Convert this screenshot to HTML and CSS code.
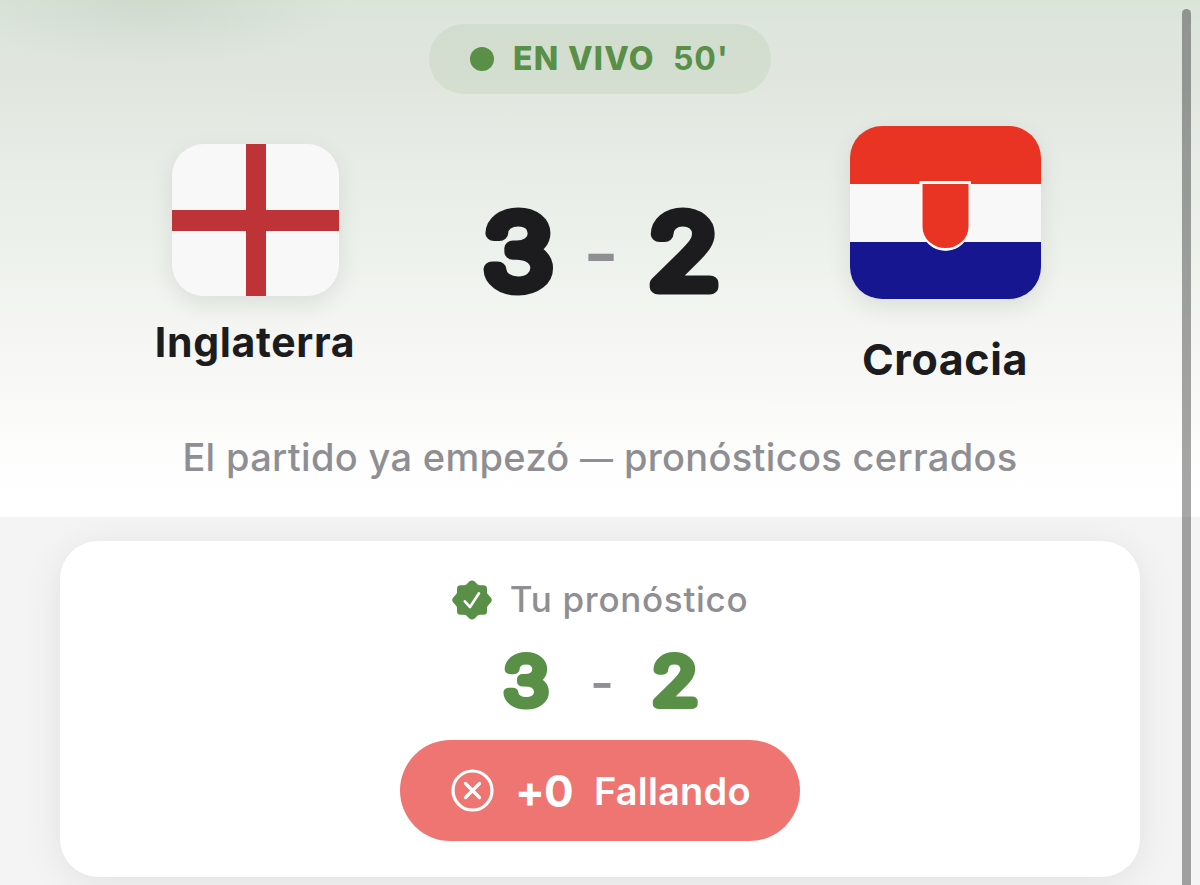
FILE: index.html
```
<!DOCTYPE html>
<html lang="es">
<head>
	<meta charset="utf-8">
	<title>Inglaterra - Croacia</title>
	<link rel="stylesheet" href="styles.css">
</head>
<body>
<div class="screen">
	<div class="hero">
		<div class="live">
			<span class="dot"></span>
			<span class="liveText">EN VIVO</span>
			<span class="minute">50'</span>
		</div>

		<div class="match">
			<div class="team home">
				<svg class="flag" width="167" height="152" viewBox="0 0 167 152">
					<rect width="167" height="152" fill="#f8f8f8"/>
					<path d="M74 0h20v152H74zM0 66h167v21H0z" fill="#be3337"/>
				</svg>
				<div class="name">Inglaterra</div>
			</div>
			<svg class="score" width="260" height="150" viewBox="0 0 260 150">
				<text class="num" transform="translate(48 116.500) scale(1.170 1)">3</text>
				<text class="dash" x="131" y="111">-</text>
				<text class="num" transform="translate(214 116.500) scale(1.170 1)">2</text>
			</svg>
			<div class="team away">
				<svg class="flag" width="191" height="173" viewBox="0 0 191 173">
					<rect width="191" height="173" fill="#f8f8f8"/>
					<rect width="191" height="58" fill="#e93424"/>
					<rect y="116" width="191" height="57" fill="#171691"/>
					<path d="M69.500 55H121V58H118.500V102a23 22.500 0 0 1-46 0V58H69.500z" fill="#fff"/>
					<path d="M71 57h49v44a24.500 23.700 0 0 1-49 0z" fill="#fff"/>
					<path d="M72.500 58h46v43a23 21 0 0 1-46 0z" fill="#e93424"/>
				</svg>
				<div class="name">Croacia</div>
			</div>
		</div>

		<div class="closed">El partido ya empezó <span>—</span> pronósticos cerrados</div>
	</div>

	<div class="card">
		<div class="cardHead">
			<svg width="40" height="40" viewBox="0 0 40 40">
				<path d="M17 1.800Q20-1 23 1.800L25.600 4.400Q26.500 5.200 28 5.200H31.500Q35 5.200 35 8.800V12Q35 13.500 36 14.500L38.400 17Q41.200 20 38.400 23L36 25.500Q35 26.500 35 28V31.200Q35 34.800 31.500 34.800H28Q26.500 34.800 25.600 35.600L23 38.200Q20 41 17 38.200L14.400 35.600Q13.500 34.800 12 34.800H8.500Q5 34.800 5 31.200V28Q5 26.500 4 25.500L1.600 23Q-1.200 20 1.600 17L4 14.500Q5 13.500 5 12V8.800Q5 5.200 8.500 5.200H12Q13.500 5.200 14.400 4.400Z" fill="#598f47"/>
				<path d="M12.800 21.300L18 27L27 13.300" fill="none" stroke="#fff" stroke-width="2.600" stroke-linecap="round" stroke-linejoin="round"/>
			</svg>
			<span>Tu pronóstico</span>
		</div>
		<svg class="pick" width="220" height="100" viewBox="0 0 220 100">
			<text class="num" transform="translate(36 74.500) scale(1.170 1)">3</text>
			<text class="dash" x="112" y="72">-</text>
			<text class="num" transform="translate(185 74.500) scale(1.170 1)">2</text>
		</svg>
		<div class="result">
			<svg width="44" height="44" viewBox="0 0 44 44" fill="none" stroke="#fff" stroke-linecap="round">
				<circle cx="21.500" cy="21.500" r="19.500" stroke-width="3.200"/>
				<path d="M14.500 14.500L28.500 28.500M28.500 14.500L14.500 28.500" stroke-width="3.200"/>
			</svg>
			<span class="points">+0</span>
			<span class="status">Fallando</span>
		</div>
	</div>
</div>
<div class="scrollbar"></div>
</body>
</html>
```

FILE: styles.css
```
body{
	margin: 0;
	background: #f4f4f4;
	font-family: Inter, "Liberation Sans", sans-serif;
	color: #1c1c1e;
}
.screen{
	height: 885px;
	overflow: hidden;
}
.hero{
	height: 517px;
	box-sizing: border-box;
	padding-top: 24px;
	display: flex;
	flex-direction: column;
	align-items: center;
	background:
		radial-gradient(ellipse 200px 65px at 150px 0, rgba(90,105,85,.09), rgba(90,105,85,.04) 60%, rgba(90,105,85,0)),
		linear-gradient(#dbe5d7 0, #dde5dc 22px, #e0e6de 75px, #e7ede6 160px, #edf2ec 260px, #f4f5f2 320px, #f9f9f7 400px, #fefefe 470px, #fff 517px);
}
.live{
	width: 342px;
	height: 70px;
	box-sizing: border-box;
	padding: 0 0 1px 41px;
	border-radius: 35px;
	display: flex;
	align-items: center;
	background: rgba(89,143,71,.09);
	color: #598f47;
	font-size: 32px;
}
.dot{
	width: 24px;
	height: 24px;
	border-radius: 50%;
	background: #598f47;
}
.liveText{
	margin-left: 19px;
	font-weight: 800;
	letter-spacing: 1.3px;
}
.minute{
	margin-left: 18px;
	font-weight: 700;
	letter-spacing: 1px;
}
.match{
	display: grid;
	grid-template-columns: 345px 345px 345px;
	justify-items: center;
	align-items: start;
	height: 340px;
}
.team{
	display: flex;
	flex-direction: column;
	align-items: center;
}
.home{
	padding-top: 50px;
}
.away{
	padding-top: 32px;
}
.flag{
	border-radius: 32px;
	box-shadow: 0 8px 24px rgba(0,0,0,.09);
}
.name{
	font-weight: 700;
	white-space: nowrap;
}
.home .name{
	margin-top: 21px;
	font-size: 41px;
	line-height: 50px;
	letter-spacing: .65px;
}
.away .name{
	margin-top: 33px;
	font-size: 43px;
	line-height: 54px;
	letter-spacing: .6px;
}
.score{
	margin-top: 76px;
}
/* thin digits with a thick round stroke give the rounded heavy look */
.num{
	font-weight: 200;
	text-anchor: middle;
	stroke-linejoin: round;
}
.score .num{
	font-size: 98px;
	fill: #1c1c1e;
	stroke: #1c1c1e;
	stroke-width: 15px;
}
.dash{
	font-weight: 500;
	text-anchor: middle;
	fill: #8e8e93;
}
.score .dash{
	font-size: 78px;
}
.closed{
	font-size: 38px;
	line-height: 46px;
	font-weight: 500;
	letter-spacing: .33px;
	color: #8e8e93;
	white-space: nowrap;
}
.closed span{
	font-size: 33px;
}
.card{
	width: 1080px;
	height: 336px;
	box-sizing: border-box;
	margin: 24px auto 0;
	padding-top: 38px;
	display: flex;
	flex-direction: column;
	align-items: center;
	border-radius: 38px;
	background: #fff;
	box-shadow: 0 6px 40px rgba(0,0,0,.08);
	clip-path: inset(-24px -60px -60px -60px);
}
.cardHead{
	display: flex;
	align-items: center;
	gap: 18px;
	height: 42px;
	font-size: 35px;
	font-weight: 550;
	letter-spacing: .7px;
	color: #8e8e93;
}
.cardHead span{
	margin-top: -3px;
}
.pick{
	margin-top: 8px;
}
.pick .num{
	font-size: 64px;
	fill: #598f47;
	stroke: #598f47;
	stroke-width: 9.800px;
}
.pick .dash{
	font-size: 52px;
}
.result{
	width: 400px;
	height: 101px;
	box-sizing: border-box;
	margin-top: 11px;
	padding-left: 51px;
	border-radius: 51px;
	display: flex;
	align-items: center;
	background: #ee7572;
	color: #fff;
}
.points{
	margin-left: 20px;
	font-size: 44px;
	font-weight: 700;
	letter-spacing: -.8px;
}
.status{
	margin-left: 21px;
	font-size: 38px;
	font-weight: 600;
	letter-spacing: .2px;
}
.scrollbar{
	position: absolute;
	top: 9px;
	right: 9px;
	width: 9px;
	height: 890px;
	border-radius: 5px;
	background: rgba(0,0,0,.35);
	clip-path: inset(0 0 14px 0);
}
```
